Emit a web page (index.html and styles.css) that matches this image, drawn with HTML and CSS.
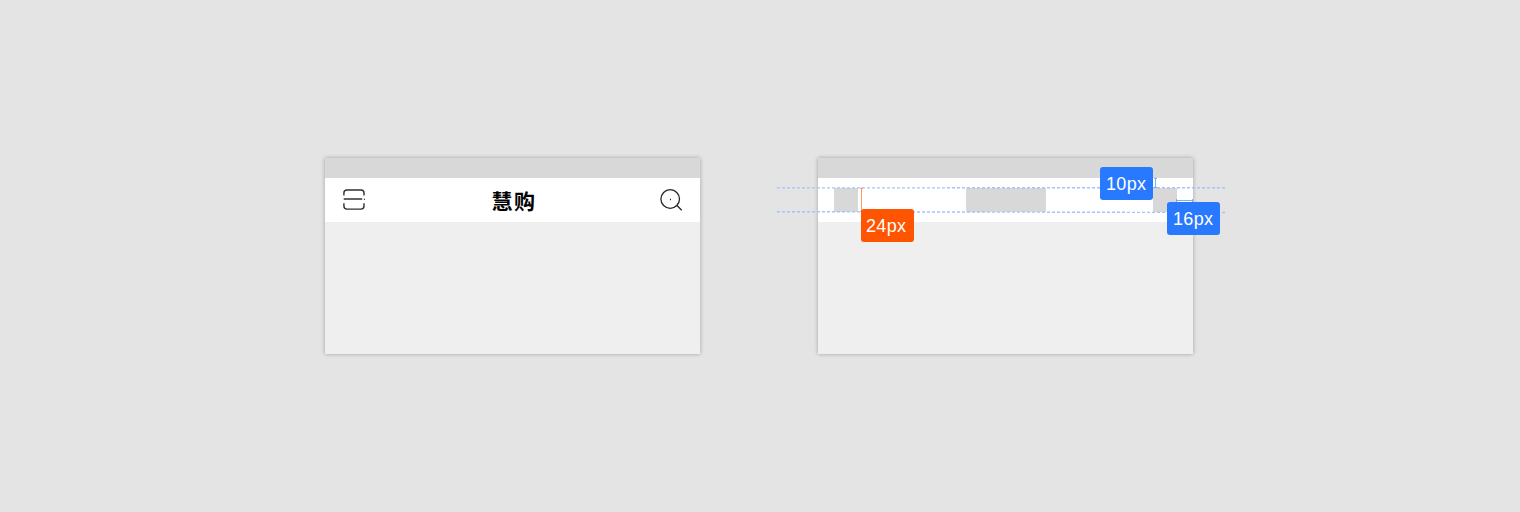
FILE: index.html
```
<!DOCTYPE html>
<html lang="zh-CN">
<head>
<meta charset="utf-8">
<title>慧购</title>
<link rel="stylesheet" href="styles.css">
</head>
<body>
<main class="board">
  <section class="screen">
    <div class="status"></div>
    <header class="nav">
      <svg class="icon" width="24" height="24" viewBox="0 0 24 24" fill="none" stroke="#303036" stroke-width="1.4"><path d="M2.900 7.600V5Q2.900 2 6 2H20Q23 2 23 5V7.600M2.900 15.300V18Q2.900 21.100 6 21.100H20Q23 21.100 23 18V15.300M2.700 11H21.200M22.900 11.400H23.900"/></svg>
      <h1 class="logo">慧购</h1>
      <svg class="icon" width="24" height="24" viewBox="0 0 24 24" fill="none" stroke="#252529" stroke-width="1.3"><circle cx="10.200" cy="11" r="9.300"/><path d="M16.800 17.300L21.700 22.200M10 11.500H11"/></svg>
    </header>
  </section>
  <section class="screen">
    <div class="status"></div>
    <header class="nav">
      <span class="block"></span>
      <span class="block block-wide"></span>
      <span class="block"></span>
    </header>
    <svg class="guides" width="448" height="50" viewBox="0 0 448 50" fill="none">
      <path d="M0 9.900L448 9.700" stroke="#a3c4fb" stroke-width="1.400" stroke-dasharray="3 2"/>
      <path d="M0 33.700L448 34.500" stroke="#a3c4fb" stroke-width="1.400" stroke-dasharray="3 2"/>
      <path d="M84.500 10V33M83 10.300H86M83 33.300H86" stroke="#ff7f45" stroke-width=".8"/>
      <path d="M378.500 .5V9.500M377 .5H380M377 9.500H380M399.500 22.500H416M399.500 21V24M415.500 21V24" stroke="#5c9bff" stroke-width=".8"/>
    </svg>
    <span class="tag tag-height">24px</span>
    <span class="tag tag-top">10px</span>
    <span class="tag tag-side">16px</span>
  </section>
</main>
</body>
</html>
```
FILE: styles.css
```
body {
  margin: 0;
  background: #e4e4e4;
  font-family: "Liberation Sans", "Noto Sans CJK SC", sans-serif;
}
.board {
  display: flex;
  gap: 118px;
  box-sizing: border-box;
  height: 512px;
  padding: 158px 0 0 325px;
}
.screen {
  position: relative;
  width: 375px;
  height: 196px;
  background: #efefef;
  box-shadow: 0 0 4px rgba(0, 0, 0, .3);
}
.status {
  height: 20px;
  background: #d8d8d8;
}
.nav {
  display: flex;
  align-items: center;
  justify-content: space-between;
  box-sizing: border-box;
  height: 44px;
  padding: 0 16px;
  background: #fff;
}
.icon {
  display: block;
}
.logo {
  margin: 0 0 0 3px;
  color: #000;
  font: 700 21px/24px "Noto Sans CJK SC", sans-serif;
  letter-spacing: 1.500px;
}
.block {
  width: 24px;
  height: 24px;
  background: #d8d8d8;
}
.block-wide {
  width: 80px;
}
.guides {
  position: absolute;
  top: 20px;
  left: -41px;
}
.tag {
  position: absolute;
  box-sizing: border-box;
  width: 53px;
  height: 33px;
  padding-left: 6px;
  border-radius: 3px;
  background: #2979ff;
  color: #fff;
  font-size: 18px;
  line-height: 34px;
  letter-spacing: .350px;
}
.tag-height {
  top: 51px;
  left: 43px;
  padding-left: 5px;
  background: #ff5500;
}
.tag-top {
  top: 9px;
  left: 282px;
}
.tag-side {
  top: 44px;
  left: 349px;
}
```
